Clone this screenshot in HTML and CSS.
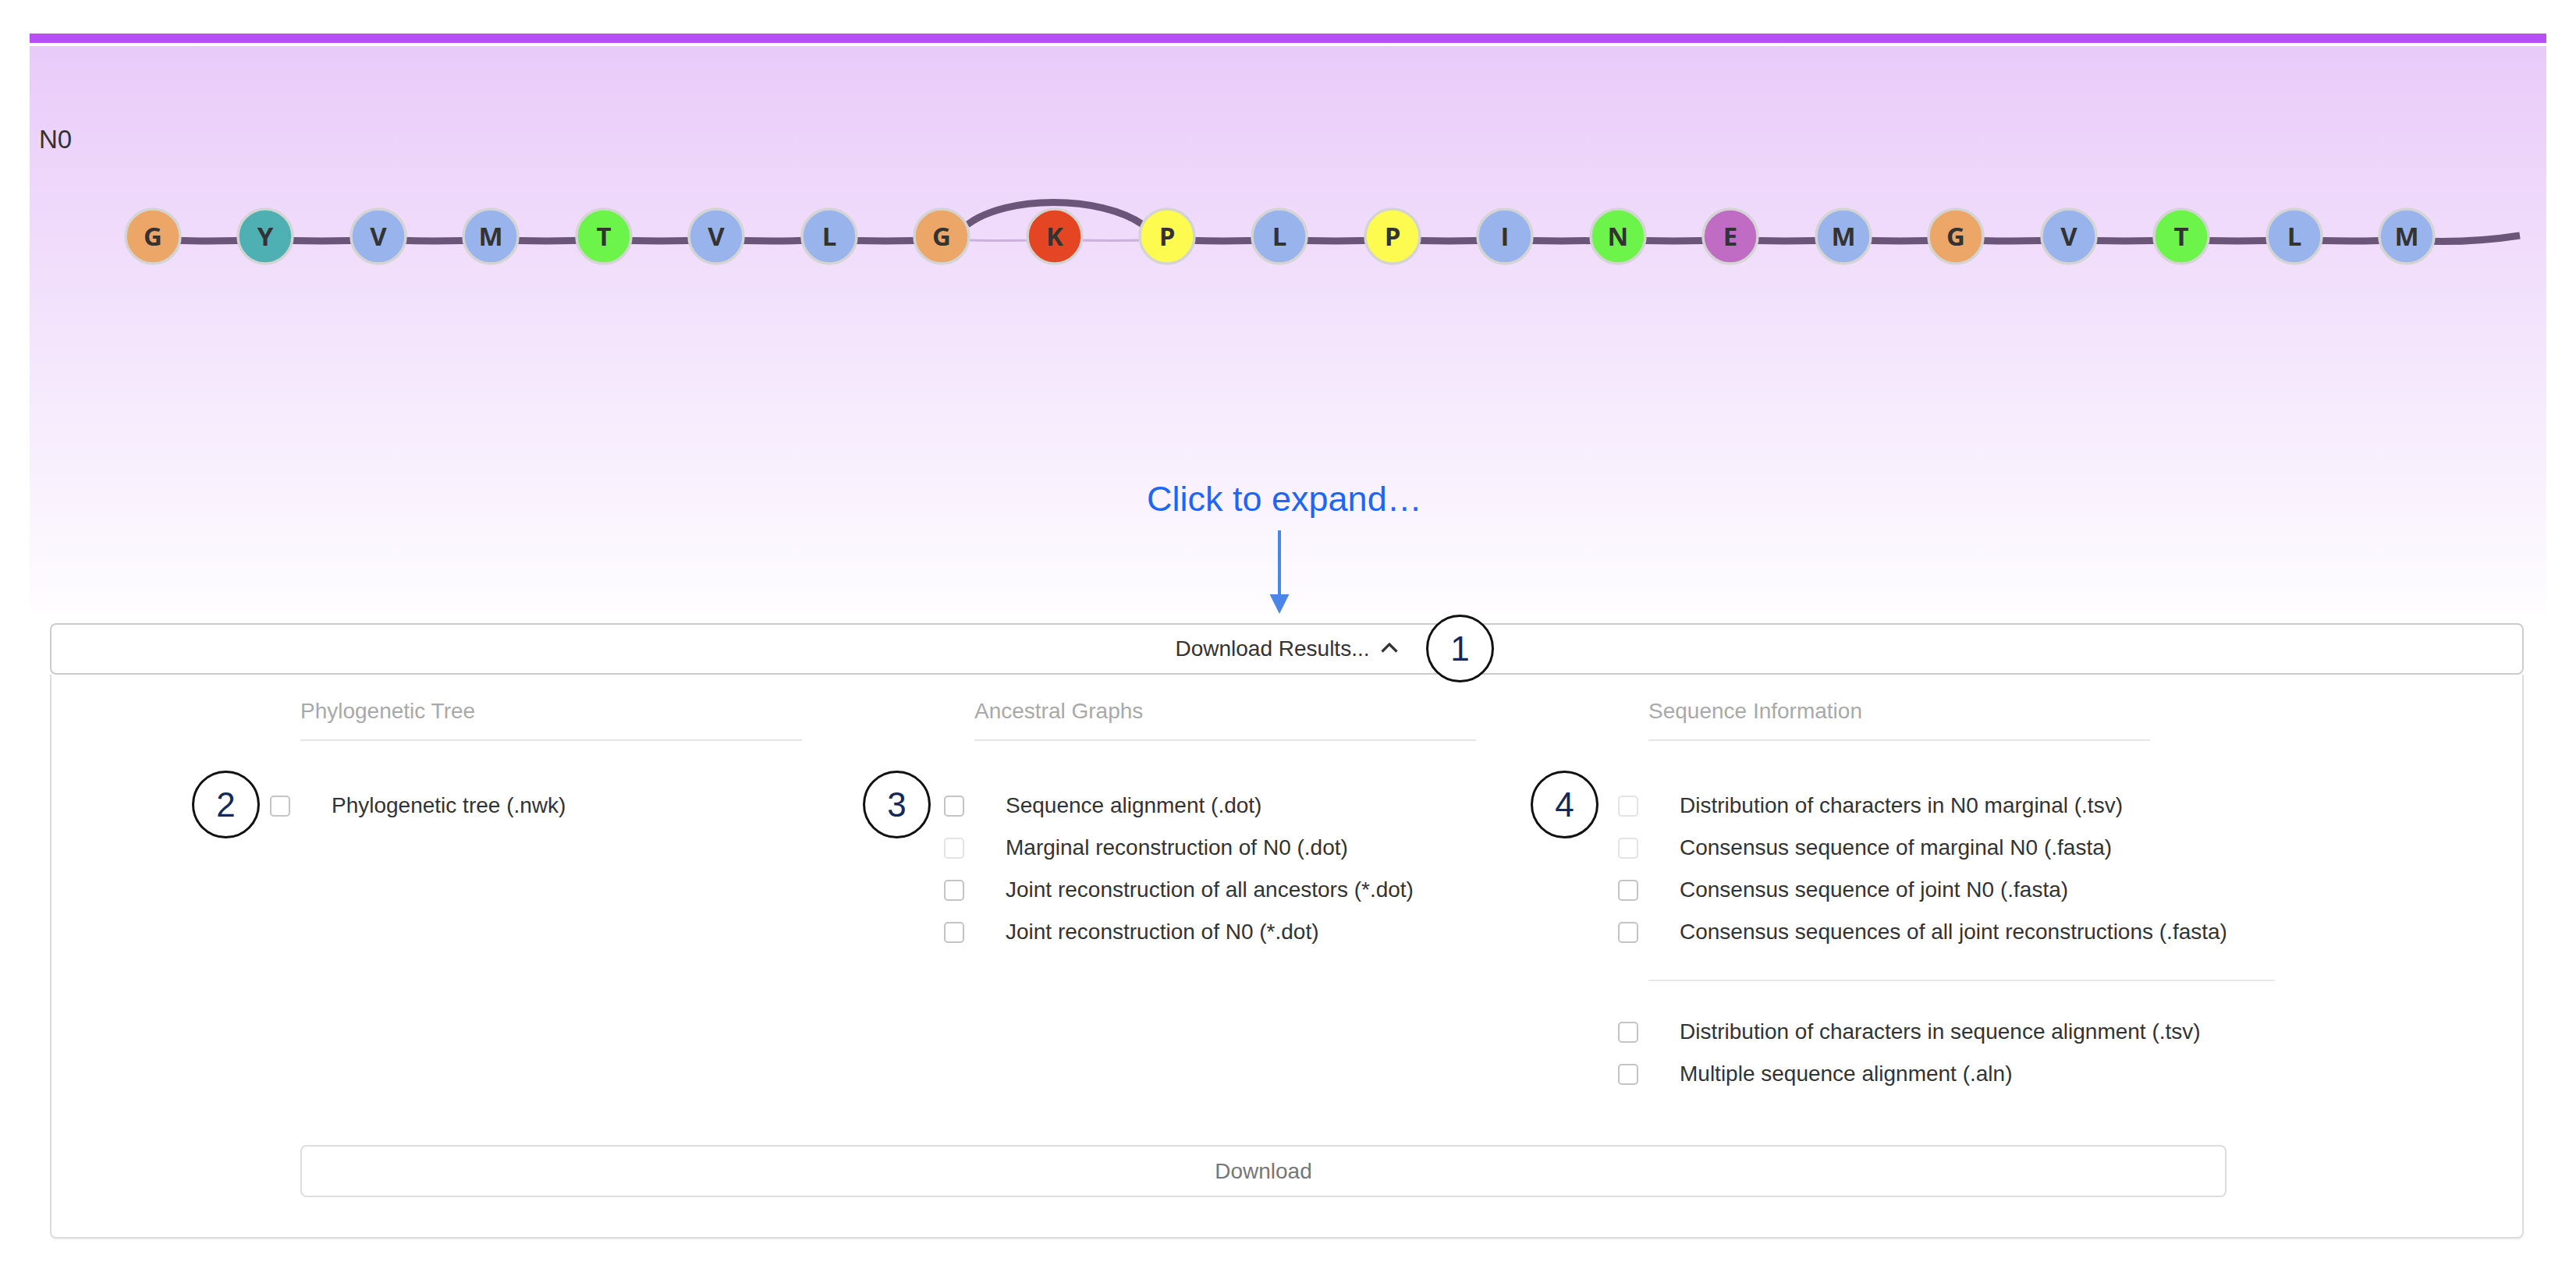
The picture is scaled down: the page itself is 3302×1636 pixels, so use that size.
FILE: index.html
```html
<!DOCTYPE html>
<html>
<head>
<meta charset="utf-8">
<link rel="stylesheet" href="styles.css">
</head>
<body>
<div class="page">
  <div class="topbar"></div>
  <section class="graph-area">
    <div class="node-label">N0</div>
    <svg class="graph" width="3226" height="729" viewBox="0 0 3226 729">
      <g class="edges">
        <path d="M158 248 Q230 252 302 248"/>
        <path d="M302 248 Q374 252 447 248"/>
        <path d="M447 248 Q519 252 591 248"/>
        <path d="M591 248 Q663 252 736 248"/>
        <path d="M736 248 Q808 252 880 248"/>
        <path d="M880 248 Q952 252 1025 248"/>
        <path d="M1025 248 Q1097 252 1169 248"/>
        <path d="M1458 248 Q1530 252 1602 248"/>
        <path d="M1602 248 Q1674 252 1747 248"/>
        <path d="M1747 248 Q1819 252 1891 248"/>
        <path d="M1891 248 Q1963 252 2036 248"/>
        <path d="M2036 248 Q2108 252 2180 248"/>
        <path d="M2180 248 Q2252 252 2325 248"/>
        <path d="M2325 248 Q2397 252 2469 248"/>
        <path d="M2469 248 Q2541 252 2614 248"/>
        <path d="M2614 248 Q2686 252 2758 248"/>
        <path d="M2758 248 Q2830 252 2903 248"/>
        <path d="M2903 248 Q2975 252 3047 248"/>
        <path d="M3047 249 Q3120 254 3192 243"/>
        <path d="M1202 229 C1252 191 1372 191 1427 229"/>
      </g>
      <g class="thin">
        <path d="M1169 248 Q1241 251 1314 248"/>
        <path d="M1314 248 Q1386 251 1458 248"/>
      </g>
      <g class="nodes">
        <circle cx="158" cy="244" r="35" fill="#eba668"/><text x="158" y="256">G</text>
        <circle cx="302" cy="244" r="35" fill="#4fb0b3"/><text x="302" y="256">Y</text>
        <circle cx="447" cy="244" r="35" fill="#99b4ec"/><text x="447" y="256">V</text>
        <circle cx="591" cy="244" r="35" fill="#99b4ec"/><text x="591" y="256">M</text>
        <circle cx="736" cy="244" r="35" fill="#6df44b"/><text x="736" y="256">T</text>
        <circle cx="880" cy="244" r="35" fill="#99b4ec"/><text x="880" y="256">V</text>
        <circle cx="1025" cy="244" r="35" fill="#99b4ec"/><text x="1025" y="256">L</text>
        <circle cx="1169" cy="244" r="35" fill="#eba668"/><text x="1169" y="256">G</text>
        <circle cx="1314" cy="244" r="35" fill="#e44624"/><text x="1314" y="256">K</text>
        <circle cx="1458" cy="244" r="35" fill="#fefb50"/><text x="1458" y="256">P</text>
        <circle cx="1602" cy="244" r="35" fill="#99b4ec"/><text x="1602" y="256">L</text>
        <circle cx="1747" cy="244" r="35" fill="#fefb50"/><text x="1747" y="256">P</text>
        <circle cx="1891" cy="244" r="35" fill="#99b4ec"/><text x="1891" y="256">I</text>
        <circle cx="2036" cy="244" r="35" fill="#6df44b"/><text x="2036" y="256">N</text>
        <circle cx="2180" cy="244" r="35" fill="#c06cc4"/><text x="2180" y="256">E</text>
        <circle cx="2325" cy="244" r="35" fill="#99b4ec"/><text x="2325" y="256">M</text>
        <circle cx="2469" cy="244" r="35" fill="#eba668"/><text x="2469" y="256">G</text>
        <circle cx="2614" cy="244" r="35" fill="#99b4ec"/><text x="2614" y="256">V</text>
        <circle cx="2758" cy="244" r="35" fill="#6df44b"/><text x="2758" y="256">T</text>
        <circle cx="2903" cy="244" r="35" fill="#99b4ec"/><text x="2903" y="256">L</text>
        <circle cx="3047" cy="244" r="35" fill="#99b4ec"/><text x="3047" y="256">M</text>
      </g>
      <g class="arrow">
        <line x1="1602" y1="621" x2="1602" y2="706"/>
        <polygon points="1589.5,703 1614.5,703 1602,728"/>
      </g>
    </svg>
    <div class="hint">Click to expand…</div>
  </section>

  <div class="panel">
    <div class="panel-heading">
      <span>Download Results...</span>
      <svg class="caret" width="24" height="16" viewBox="0 0 24 16"><path d="M2.5 13.5 L12 4 L21.5 13.5"/></svg>
    </div>
    <div class="panel-body">
      <div class="columns">
        <div class="col">
          <div class="col-title">Phylogenetic Tree</div>
          <div class="opts">
            <div class="opt"><span class="box"></span><label>Phylogenetic tree (.nwk)</label></div>
          </div>
        </div>
        <div class="col">
          <div class="col-title">Ancestral Graphs</div>
          <div class="opts">
            <div class="opt"><span class="box"></span><label>Sequence alignment (.dot)</label></div>
            <div class="opt"><span class="box light"></span><label>Marginal reconstruction of N0 (.dot)</label></div>
            <div class="opt"><span class="box"></span><label>Joint reconstruction of all ancestors (*.dot)</label></div>
            <div class="opt"><span class="box"></span><label>Joint reconstruction of N0 (*.dot)</label></div>
          </div>
        </div>
        <div class="col">
          <div class="col-title">Sequence Information</div>
          <div class="opts">
            <div class="opt"><span class="box light"></span><label>Distribution of characters in N0 marginal (.tsv)</label></div>
            <div class="opt"><span class="box light"></span><label>Consensus sequence of marginal N0 (.fasta)</label></div>
            <div class="opt"><span class="box"></span><label>Consensus sequence of joint N0 (.fasta)</label></div>
            <div class="opt"><span class="box"></span><label>Consensus sequences of all joint reconstructions (.fasta)</label></div>
            <div class="sep"></div>
            <div class="opt"><span class="box"></span><label>Distribution of characters in sequence alignment (.tsv)</label></div>
            <div class="opt"><span class="box"></span><label>Multiple sequence alignment (.aln)</label></div>
          </div>
        </div>
      </div>
      <button class="download">Download</button>
    </div>
  </div>

  <div class="callout c1">1</div>
  <div class="callout c2">2</div>
  <div class="callout c3">3</div>
  <div class="callout c4">4</div>
</div>
</body>
</html>
```

FILE: styles.css
```css
html, body {
  margin: 0;
  padding: 0;
  background: #ffffff;
}

body {
  font-family: "Liberation Sans", Arial, Helvetica, sans-serif;
  color: #333333;
}

.page {
  position: relative;
  padding: 43px 38px 0 38px;
  min-height: 1593px;
}

.topbar {
  height: 12px;
  background: #b94ff2;
  margin-bottom: 4px;
}

.graph-area {
  position: relative;
  height: 729px;
  box-sizing: border-box;
  padding: 103px 0 0 12px;
  background: linear-gradient(to bottom, #e9cbf9 0%, #fefdff 100%);
}

.node-label {
  position: relative;
  z-index: 1;
  font-size: 33px;
  line-height: 33px;
  color: #333333;
}

.graph {
  position: absolute;
  left: 0;
  top: 0;
  display: block;
}

.graph .edges path {
  fill: none;
  stroke: #6b5578;
  stroke-width: 9;
}

.graph .thin path {
  fill: none;
  stroke: #cbb2de;
  stroke-width: 3;
}

.graph .nodes circle {
  stroke: #d4d4d4;
  stroke-width: 3.5;
}

.graph .nodes text {
  font-family: "Open Sans", "DejaVu Sans", sans-serif;
  font-weight: 700;
  font-size: 33px;
  fill: #333333;
  text-anchor: middle;
}

.graph .arrow line {
  stroke: #4a86e8;
  stroke-width: 4;
}

.graph .arrow polygon {
  fill: #4a86e8;
}

.hint {
  position: absolute;
  left: 1432px;
  top: 558px;
  font-size: 45px;
  line-height: 45px;
  color: #1d66fb;
  white-space: nowrap;
}

.panel {
  margin: 11px 29px 0 26px;
}

.panel-heading {
  box-sizing: border-box;
  height: 66px;
  border: 2px solid #cccccc;
  border-radius: 8px;
  display: flex;
  align-items: center;
  justify-content: center;
  gap: 13px;
  font-size: 28px;
  line-height: 40px;
  color: #333333;
  background: #ffffff;
}

.caret {
  display: block;
  margin-top: -4px;
}

.caret path {
  fill: none;
  stroke: #333333;
  stroke-width: 3.2;
}

.panel-body {
  border: 2px solid #dddddd;
  border-top: none;
  border-radius: 0 0 8px 8px;
  padding: 27px 0 51px 319px;
  box-shadow: 0 2px 2px rgba(0, 0, 0, 0.05);
  background: #ffffff;
}

.columns {
  display: grid;
  grid-template-columns: 864px 864px 864px;
}

.col-title {
  width: 643px;
  font-size: 28px;
  line-height: 40px;
  color: #a9a9a9;
  padding-bottom: 16px;
  border-bottom: 2px solid #e6e6e6;
}

.opts {
  margin-top: 56px;
}

.opt {
  height: 54px;
  display: flex;
  align-items: center;
  font-size: 28px;
  line-height: 40px;
  color: #333333;
  white-space: nowrap;
}

.box {
  box-sizing: border-box;
  flex: none;
  width: 26px;
  height: 27px;
  margin-left: -39px;
  border: 2px solid #c4c4c4;
  border-radius: 5px;
  background: #ffffff;
}

.box.light {
  border-color: #e3e3e3;
}

.opt label {
  margin-left: 53px;
}

.sep {
  width: 803px;
  border-top: 2px solid #e8e8e8;
  margin: 34px 0 38px 0;
}

.download {
  display: block;
  box-sizing: border-box;
  width: 2469px;
  height: 67px;
  margin-top: 64px;
  border: 2px solid #dddddd;
  border-radius: 8px;
  background: #ffffff;
  font-family: "Liberation Sans", Arial, Helvetica, sans-serif;
  font-size: 28px;
  color: #777777;
  padding: 0;
}

.callout {
  position: absolute;
  box-sizing: border-box;
  width: 87px;
  height: 87px;
  border: 3px solid #111111;
  border-radius: 50%;
  background: #ffffff;
  display: flex;
  align-items: center;
  justify-content: center;
  font-size: 44px;
  color: #14285a;
}

.c1 { left: 1828px; top: 788px; }
.c2 { left: 246px; top: 988px; }
.c3 { left: 1106px; top: 988px; }
.c4 { left: 1962px; top: 988px; }
```
